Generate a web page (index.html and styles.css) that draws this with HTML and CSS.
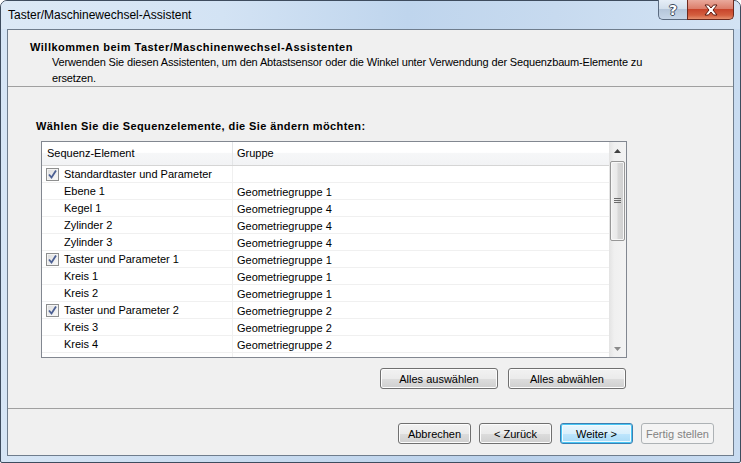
FILE: index.html
```html
<!DOCTYPE html>
<html lang="de">
<head>
<meta charset="utf-8">
<title>Taster/Maschinewechsel-Assistent</title>
<link rel="stylesheet" href="styles.css">
</head>
<body>
<div class="window">
  <div class="titlebar">
    <span class="title">Taster/Maschinewechsel-Assistent</span>
    <div class="caption-btns">
      <div class="cbtn help"><span class="help-glyph">?</span></div>
      <div class="cbtn close">
        <svg width="16" height="12" viewBox="0 0 16 12">
          <path d="M2 1 H5.5 L8 4 L10.5 1 H14 L10 6 L14 11 H10.5 L8 8 L5.5 11 H2 L6 6 Z" fill="#ffffff" stroke="#5a1a10" stroke-width="1" stroke-linejoin="round"/>
        </svg>
      </div>
    </div>
  </div>
  <div class="client">
    <div class="header">
      <div class="h-title">Willkommen beim Taster/Maschinenwechsel-Assistenten</div>
      <div class="h-sub">Verwenden Sie diesen Assistenten, um den Abtastsensor oder die Winkel unter Verwendung der Sequenzbaum-Elemente zu<br>ersetzen.</div>
    </div>
    <div class="body">
      <div class="prompt">Wählen Sie die Sequenzelemente, die Sie ändern möchten:</div>
      <div class="listview">
        <div class="lv-main">
          <div class="lv-head">
            <div class="c1">Sequenz-Element</div>
            <div class="c2">Gruppe</div>
          </div>
          <div class="row"><div class="c1"><span class="chk"><svg width="11" height="11" viewBox="0 0 11 11"><path d="M2 5.5 L4.5 8.5 L9 1.5" fill="none" stroke="#4b5f93" stroke-width="1.8"/></svg></span>Standardtaster und Parameter</div><div class="c2"></div></div>
          <div class="row"><div class="c1 child">Ebene 1</div><div class="c2">Geometriegruppe 1</div></div>
          <div class="row"><div class="c1 child">Kegel 1</div><div class="c2">Geometriegruppe 4</div></div>
          <div class="row"><div class="c1 child">Zylinder 2</div><div class="c2">Geometriegruppe 4</div></div>
          <div class="row"><div class="c1 child">Zylinder 3</div><div class="c2">Geometriegruppe 4</div></div>
          <div class="row"><div class="c1"><span class="chk"><svg width="11" height="11" viewBox="0 0 11 11"><path d="M2 5.5 L4.5 8.5 L9 1.5" fill="none" stroke="#4b5f93" stroke-width="1.8"/></svg></span>Taster und Parameter 1</div><div class="c2">Geometriegruppe 1</div></div>
          <div class="row"><div class="c1 child">Kreis 1</div><div class="c2">Geometriegruppe 1</div></div>
          <div class="row"><div class="c1 child">Kreis 2</div><div class="c2">Geometriegruppe 1</div></div>
          <div class="row"><div class="c1"><span class="chk"><svg width="11" height="11" viewBox="0 0 11 11"><path d="M2 5.5 L4.5 8.5 L9 1.5" fill="none" stroke="#4b5f93" stroke-width="1.8"/></svg></span>Taster und Parameter 2</div><div class="c2">Geometriegruppe 2</div></div>
          <div class="row"><div class="c1 child">Kreis 3</div><div class="c2">Geometriegruppe 2</div></div>
          <div class="row"><div class="c1 child">Kreis 4</div><div class="c2">Geometriegruppe 2</div></div>
          <div class="row"><div class="c1 child"></div><div class="c2"></div></div>
        </div>
        <div class="scrollbar">
          <div class="sb-btn"><svg width="7" height="4" viewBox="0 0 7 4"><path d="M0 4 L3.5 0 L7 4 Z" fill="#404040"/></svg></div>
          <div class="sb-track">
            <div class="sb-thumb">
              <svg width="7" height="6" viewBox="0 0 7 6"><path d="M0 0.5 H7 M0 2.5 H7 M0 4.5 H7" stroke="#6b6b6b" stroke-width="1"/></svg>
            </div>
          </div>
          <div class="sb-btn"><svg width="7" height="4" viewBox="0 0 7 4"><path d="M0 0 L3.5 4 L7 0 Z" fill="#8a8a8a"/></svg></div>
        </div>
      </div>
      <div class="sel-btns">
        <button class="btn wide">Alles auswählen</button>
        <button class="btn wide">Alles abwählen</button>
      </div>
    </div>
    <div class="footer">
      <button class="btn">Abbrechen</button>
      <button class="btn">&lt; Zurück</button>
      <button class="btn default">Weiter &gt;</button>
      <button class="btn" disabled>Fertig stellen</button>
    </div>
  </div>
</div>
</body>
</html>
```

FILE: styles.css
```css
html, body {
  margin: 0;
  padding: 0;
  width: 741px;
  height: 463px;
  overflow: hidden;
  background: #ffffff;
}

.window {
  box-sizing: border-box;
  width: 741px;
  height: 463px;
  border: 1px solid #3e4c5e;
  border-radius: 7px 7px 2px 2px;
  background: linear-gradient(to right, #d6e5f5 0%, #c4d8ee 45%, #b9d0ea 70%, #c9dcf1 100%);
  padding: 0 6px 6px 6px;
  display: flex;
  flex-direction: column;
  font-family: "Liberation Sans", Arial, sans-serif;
  font-size: 11px;
  color: #000;
}

.titlebar {
  height: 28px;
  margin: 0 -6px;
  padding: 0 0 0 7px;
  display: flex;
  align-items: flex-start;
  justify-content: space-between;
  background: linear-gradient(to right, #dce9f6 0%, #d3e3f4 30%, #bfd5ed 55%, #c7daef 75%, #d3e3f4 100%);
  border-radius: 6px 6px 0 0;
}

.title {
  font-size: 12px;
  line-height: 14px;
  margin-top: 7px;
  color: #000;
}

.caption-btns {
  display: flex;
  margin-right: 6px;
  margin-top: -1px;
  height: 20px;
}

.cbtn {
  box-sizing: border-box;
  height: 20px;
  display: flex;
  align-items: center;
  justify-content: center;
  border: 1px solid #5b6b80;
  border-top: none;
}

.help {
  width: 29px;
  border-radius: 0 0 0 5px;
  border-right: none;
  background: linear-gradient(to bottom, #e6eef7 0%, #d3dfec 45%, #b5c6da 50%, #c6d6e8 100%);
}

.help-glyph {
  font-family: "DejaVu Sans", sans-serif;
  font-weight: bold;
  font-size: 14px;
  line-height: 14px;
  color: #ffffff;
  text-shadow: 1px 0 0 #3b4a5c, -1px 0 0 #3b4a5c, 0 1px 0 #3b4a5c, 0 -1px 0 #3b4a5c;
}

.close {
  width: 47px;
  border-radius: 0 0 5px 0;
  background: linear-gradient(to bottom, #e9a99c 0%, #dc7e6b 45%, #c8452c 50%, #d45f3f 80%, #e58f6e 100%);
  border-color: #6d2a1e;
}

.client {
  flex: 1;
  display: flex;
  flex-direction: column;
  background: #f0f0f0;
  border: 1px solid #6f7d8d;
}

.header {
  height: 56px;
  border-bottom: 1px solid #a0a0a0;
  box-sizing: content-box;
}

.h-title {
  font-weight: bold;
  font-size: 11px;
  line-height: 14px;
  padding: 10px 0 0 22px;
  letter-spacing: 0.5px;
}

.h-sub {
  line-height: 16px;
  padding-left: 44px;
  letter-spacing: -0.15px;
}

.body {
  flex: 1;
  display: flex;
  flex-direction: column;
  padding-left: 33px;
}

.prompt {
  font-weight: bold;
  line-height: 14px;
  margin: 32px 0 0 -5px;
  letter-spacing: 0.4px;
}

.listview {
  margin-top: 8px;
  width: 584px;
  height: 215px;
  border: 1px solid #828790;
  background: #ffffff;
  display: flex;
  overflow: hidden;
}

.lv-main {
  flex: 1;
  display: flex;
  flex-direction: column;
  overflow: hidden;
}

.lv-head {
  display: flex;
  height: 23px;
  flex: none;
  border-bottom: 1px solid #d5d5d5;
  background: linear-gradient(to bottom, #ffffff 0%, #ffffff 45%, #f6f7f8 50%, #f2f3f5 100%);
}

.lv-head .c1, .lv-head .c2 {
  line-height: 23px;
}

.lv-head .c1 {
  border-right: 1px solid #e3e5e7;
}

.c1 {
  box-sizing: border-box;
  width: 191px;
  flex: none;
  padding-left: 5px;
  display: flex;
  align-items: center;
  white-space: nowrap;
}

.c2 {
  flex: 1;
  padding-left: 4px;
  white-space: nowrap;
}

.row {
  display: flex;
  height: 17px;
  flex: none;
  border-bottom: 1px solid #f0f0f0;
  box-sizing: border-box;
  line-height: 18px;
}

.row .c1 {
  border-right: 1px solid #f0f0f0;
}

.row .c1.child {
  padding-left: 22px;
}

.chk {
  box-sizing: border-box;
  width: 13px;
  height: 13px;
  margin-right: 5px;
  margin-left: -1px;
  margin-top: 1px;
  border: 1px solid #8e8f8f;
  background: linear-gradient(to bottom right, #dcdcdc, #fbfbfb);
  box-shadow: inset 0 0 0 1px #f4f4f4;
  display: flex;
  align-items: center;
  justify-content: center;
}

.chk svg {
  display: block;
}

.scrollbar {
  width: 17px;
  flex: none;
  display: flex;
  flex-direction: column;
  background: linear-gradient(to right, #e3e3e3, #f0f0f0 30%, #f3f3f3);
}

.sb-btn {
  height: 17px;
  flex: none;
  display: flex;
  align-items: center;
  justify-content: center;
}

.sb-track {
  flex: 1;
  padding-top: 2px;
}

.sb-thumb {
  box-sizing: border-box;
  margin: 0 1px;
  height: 80px;
  border: 1px solid #979797;
  border-radius: 2px;
  background: linear-gradient(to right, #f1f1f1 0%, #e9e9e9 45%, #d8d8d8 55%, #cfcfcf 100%);
  box-shadow: inset 0 0 0 1px #f7f7f7;
  display: flex;
  align-items: center;
  justify-content: center;
}

.sel-btns {
  width: 585px;
  display: flex;
  justify-content: flex-end;
  gap: 10px;
  margin-top: 10px;
}

.btn {
  box-sizing: border-box;
  height: 21px;
  width: 73px;
  padding: 0;
  font-family: "Liberation Sans", Arial, sans-serif;
  font-size: 11px;
  color: #000;
  border: 1px solid #707070;
  border-radius: 3px;
  background: linear-gradient(to bottom, #f2f2f2 0%, #ebebeb 50%, #dddddd 51%, #cfcfcf 100%);
  box-shadow: inset 0 0 0 1px #fcfcfc;
}

.btn.wide {
  width: 118px;
}

.btn.default {
  border-color: #3c7fb1;
  background: linear-gradient(to bottom, #eaf6fd 0%, #d9f0fc 50%, #bee6fd 51%, #a7d9f5 100%);
  box-shadow: inset 0 0 0 1px #48c6f5, inset 0 0 0 2px #f1fafe;
}

.btn:disabled {
  border-color: #adb2b5;
  background: #f4f4f4;
  box-shadow: none;
  color: #838383;
}

.footer {
  height: 46px;
  border-top: 1px solid #a0a0a0;
  box-sizing: content-box;
  display: flex;
  justify-content: flex-end;
  align-items: flex-start;
  gap: 8px;
  padding-right: 19px;
}

.footer .btn {
  margin-top: 14px;
}
```
